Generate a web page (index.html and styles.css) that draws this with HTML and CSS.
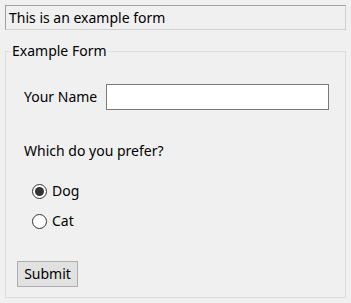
FILE: index.html
```html
<!DOCTYPE html>
<html>
  <head>
    <title>Example Form</title>
    <link rel="stylesheet" href="styles.css">
  </head>
  <body>
    <div class="caption">This is an example form</div>

    <fieldset class="form-box">
      <legend>Example Form</legend>

      <div class="name-row">
        <label for="name">Your Name</label>
        <input type="text" id="name">
      </div>

      <p class="question">Which do you prefer?</p>

      <label class="choice"><input type="radio" name="pet" value="dog" checked> Dog</label>
      <label class="choice"><input type="radio" name="pet" value="cat"> Cat</label>

      <button type="button" class="submit">Submit</button>
    </fieldset>
  </body>
</html>
```

FILE: styles.css
```css
* {
  box-sizing: border-box;
}

body {
  margin: 0;
  padding: 5px;
  background: #f0f0f0;
  font-family: "Noto Sans", sans-serif;
  font-size: 14px;
  line-height: 20px;
  color: #000;
}

.caption {
  height: 25px;
  line-height: 23px;
  padding-left: 3px;
  border: 1px solid #a0a0a0;
  border-right-color: #d0d0d0;
  border-bottom-color: #d0d0d0;
}

.form-box {
  margin: 11px 0 0;
  padding: 0 11px 10px;
  border: 1px solid #dcdcdc;
  width: 341px;
}

.form-box legend {
  padding: 0 2px;
  margin-left: -7px;
  line-height: 20px;
}

.name-row {
  display: flex;
  align-items: center;
  gap: 8px;
  margin: 23px 0 0 7px;
}

.name-row label {
  flex: none;
  width: 74px;
  white-space: nowrap;
}

.name-row input {
  flex: none;
  width: 223px;
  height: 26px;
  margin: 0;
  padding: 0 3px;
  border: 1px solid #7a7a7a;
  background: #fff;
  font: inherit;
}

.question {
  margin: 31px 0 0 7px;
}

.choice {
  display: flex;
  align-items: center;
  gap: 5px;
  margin: 20px 0 0 15px;
  height: 20px;
}

.choice + .choice {
  margin-top: 10px;
}

.choice input {
  appearance: none;
  margin: 0;
  width: 15px;
  height: 15px;
  border: 1px solid #333;
  border-radius: 50%;
  background: #fff;
  display: grid;
  place-items: center;
}

.choice input:checked::before {
  content: "";
  width: 9px;
  height: 9px;
  border-radius: 50%;
  background: #333;
}

.submit {
  display: block;
  margin-top: 30px;
  width: 61px;
  height: 26px;
  padding: 0;
  border: 1px solid #adadad;
  background: #e1e1e1;
  color: #000;
  font: inherit;
}
```
